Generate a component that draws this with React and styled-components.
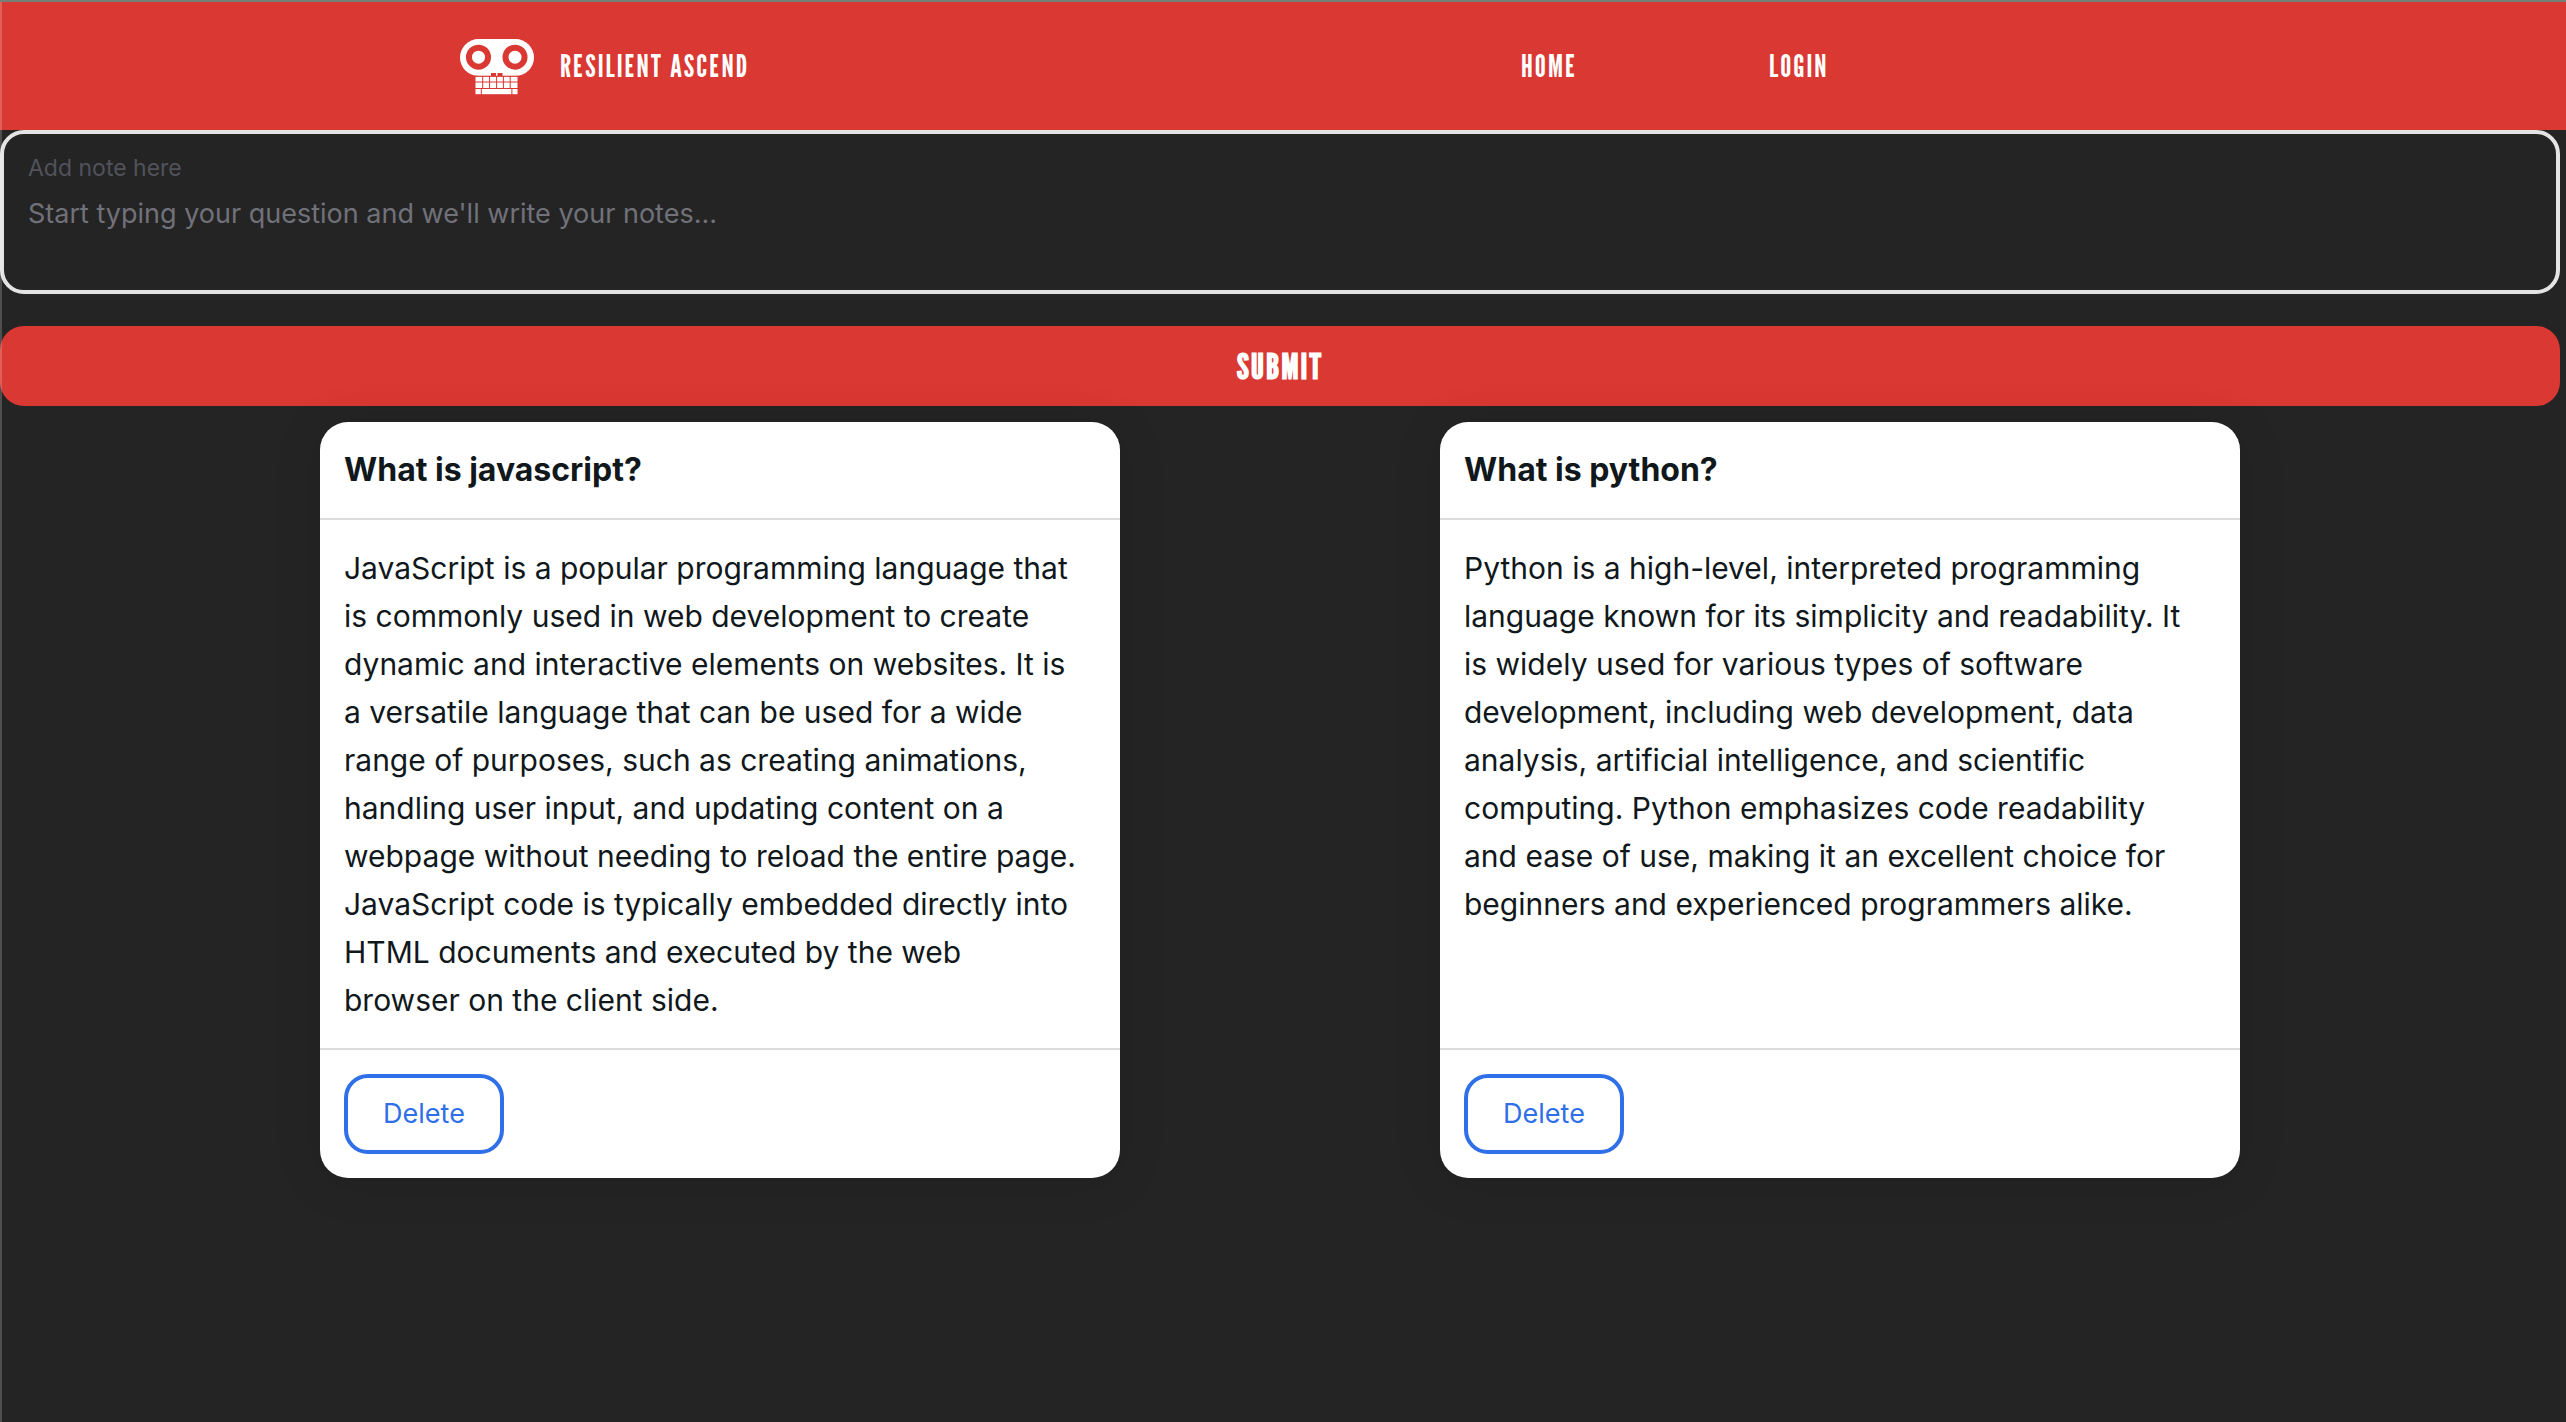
import React from "react";
import styled, { createGlobalStyle, css } from "styled-components";

const GlobalStyle = createGlobalStyle`
  * { box-sizing: border-box; }
  body { margin: 0; background: #242424; font-family: Inter, "Liberation Sans", sans-serif; }
  button, textarea, label, a { font-family: inherit; }
`;

const condensed = `"League Gothic", "Bebas Neue", "Open Sans Condensed", "Liberation Sans Narrow", "DejaVu Sans Condensed", sans-serif`;

const Page = styled.div`
  position: relative;
  min-height: 100vh;
  border-top: 2px solid #747f79;
  &::after {
    content: "";
    position: absolute;
    inset: 0 auto 0 0;
    width: 2px;
    background: rgba(255, 255, 255, 0.2);
    pointer-events: none;
  }
`;
const Header = styled.header`
  display: grid;
  grid-template-columns: 1fr 1fr;
  align-items: center;
  height: 128px;
  background: #da3832;
`;
const Brand = styled.a`
  display: flex;
  align-items: center;
  gap: 26px;
  padding-left: 460px;
  color: #fff;
  text-decoration: none;
`;
const Logo = styled.svg`
  width: 74px;
  height: 58px;
`;
const navText = css`
  font-family: ${condensed};
  font-size: 31px;
  line-height: 40px;
  font-weight: 400;
  letter-spacing: 2px;
  color: #fff;
  text-transform: uppercase;
  white-space: nowrap;
`;
const BrandName = styled.span`
  ${navText}
`;
const Nav = styled.nav`
  display: flex;
  gap: 192px;
  padding-left: 238px;
`;
const NavLink = styled.a`
  ${navText}
  text-decoration: none;
`;
const Form = styled.form`
  display: flex;
  flex-direction: column;
  gap: 32px;
  margin-right: 6px;
`;
const Field = styled.div`
  display: flex;
  flex-direction: column;
  gap: 12px;
  height: 164px;
  padding: 20px 24px;
  border: 4px solid #e4e4e5;
  border-radius: 24px;
`;
const Label = styled.label`
  font-size: 23px;
  line-height: 28px;
  color: #52525b;
`;
const Textarea = styled.textarea`
  flex: 1;
  padding: 0;
  border: 0;
  outline: 0;
  resize: none;
  background: transparent;
  color: #ecedee;
  font-size: 27px;
  line-height: 40px;
  &::placeholder { color: #71717a; opacity: 1; }
`;
const Submit = styled.button`
  height: 80px;
  border: 0;
  border-radius: 24px;
  background: #da3832;
  color: #fff;
  font: 700 36px/40px ${condensed};
  letter-spacing: 2px;
  text-transform: uppercase;
`;
const Notes = styled.main`
  display: grid;
  grid-template-columns: repeat(2, minmax(0, 800px));
  justify-content: space-evenly;
  margin-right: 6px;
  padding: 16px 0;
`;
const Card = styled.article`
  display: flex;
  flex-direction: column;
  border-radius: 28px;
  background: #fff;
  color: #11181c;
  box-shadow: 0 4px 50px rgba(0, 0, 0, 0.1);
`;
const CardHeader = styled.header`
  padding: 24px;
  border-bottom: 2px solid #dbdbdb;
`;
const Title = styled.h2`
  margin: 0;
  font-size: 32px;
  line-height: 48px;
  font-weight: 700;
`;
const Body = styled.p`
  flex: 1;
  margin: 0;
  padding: 24px 36px 24px 24px;
  font-size: 30px;
  line-height: 48px;
`;
const CardFooter = styled.footer`
  padding: 24px;
  border-top: 2px solid #dbdbdb;
`;
const Delete = styled.button`
  width: 160px;
  height: 80px;
  border: 4px solid #2f6fe8;
  border-radius: 24px;
  background: transparent;
  color: #2f6fe8;
  font-size: 27px;
  line-height: 40px;
`;

const notes = [
  {
    title: "What is javascript?",
    body: "JavaScript is a popular programming language that is commonly used in web development to create dynamic and interactive elements on websites. It is a versatile language that can be used for a wide range of purposes, such as creating animations, handling user input, and updating content on a webpage without needing to reload the entire page. JavaScript code is typically embedded directly into HTML documents and executed by the web browser on the client side.",
  },
  {
    title: "What is python?",
    body: "Python is a high-level, interpreted programming language known for its simplicity and readability. It is widely used for various types of software development, including web development, data analysis, artificial intelligence, and scientific computing. Python emphasizes code readability and ease of use, making it an excellent choice for beginners and experienced programmers alike.",
  },
];

function SkullLogo() {
  return (
    <Logo viewBox="0 -2 74 58" aria-hidden="true">
      <rect width="74" height="37" rx="18.5" fill="#fff" />
      <circle cx="18.5" cy="18.2" r="12.5" fill="#da3832" />
      <circle cx="55" cy="18.2" r="12.5" fill="#da3832" />
      <circle cx="18.5" cy="18.2" r="6.5" fill="#fff" />
      <circle cx="55" cy="18.2" r="6.5" fill="#fff" />
      <path d="M31 34H36V37H31ZM37.5 34H42.5V37H37.5Z" fill="#da3832" />
      <rect x="15.5" y="37.6" width="42" height="17.6" fill="#fff" />
      <path
        d="M15 37.2H58M15 43H58M15 49.5H58M22.7 37V49.5M29.6 37V49.5M36.6 37V49.5M43.4 37V49.5M50.2 37V49.5M21.3 49.5V56M51.9 49.5V56"
        stroke="#da3832"
        strokeWidth="1"
      />
    </Logo>
  );
}

export default function App() {
  return (
    <Page>
      <GlobalStyle />
      <Header>
        <Brand href="#">
          <SkullLogo />
          <BrandName>Resilient Ascend</BrandName>
        </Brand>
        <Nav>
          <NavLink href="#">Home</NavLink>
          <NavLink href="#">Login</NavLink>
        </Nav>
      </Header>
      <Form>
        <Field>
          <Label htmlFor="note">Add note here</Label>
          <Textarea id="note" placeholder="Start typing your question and we'll write your notes..." />
        </Field>
        <Submit type="button">Submit</Submit>
      </Form>
      <Notes>
        {notes.map((note) => (
          <Card key={note.title}>
            <CardHeader>
              <Title>{note.title}</Title>
            </CardHeader>
            <Body>{note.body}</Body>
            <CardFooter>
              <Delete type="button">Delete</Delete>
            </CardFooter>
          </Card>
        ))}
      </Notes>
    </Page>
  );
}
